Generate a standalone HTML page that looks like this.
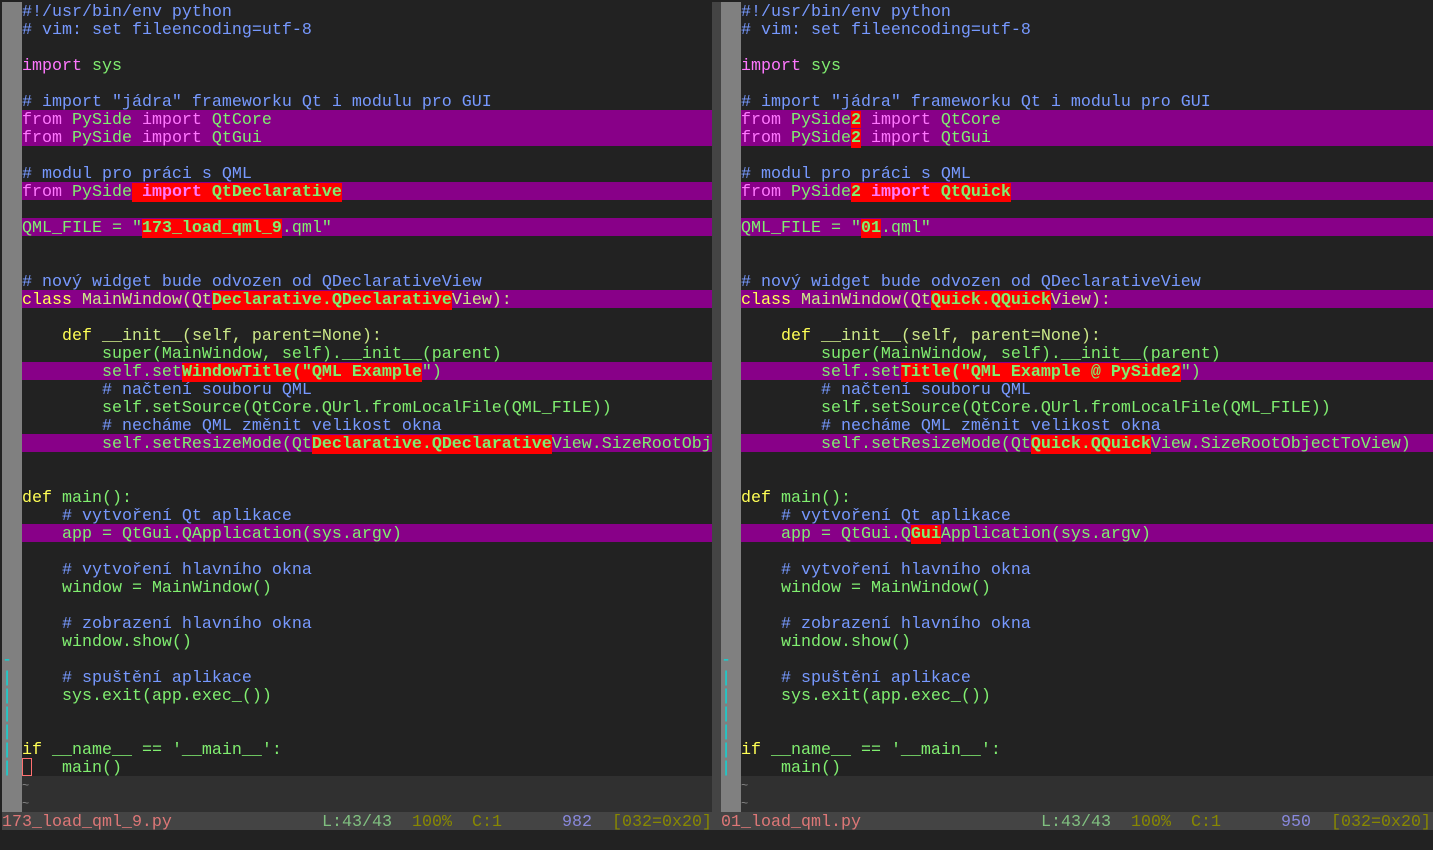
<!DOCTYPE html>
<html><head><meta charset="utf-8"><style>
html,body{margin:0;padding:0;background:#222;width:1433px;height:850px;overflow:hidden}
body{position:relative;font-family:"Liberation Mono",monospace;font-size:16.67px}
.pane{position:absolute;top:2px;overflow:hidden}
.r{height:18px;line-height:21px;white-space:pre;color:#80ee70;position:relative}
.p{background:#880088}
.t{background:#303030;color:#888;font-size:12px}
.c{color:#7799ff}.k{color:#ff77ff}.y{color:#ffff55}.x{background:#ff0000;font-weight:bold}.l{color:#cce888}
.gut{position:absolute;top:2px;width:20px;height:810px;background:#808080}
.f{position:absolute;color:#00e0e0;font-size:16px;line-height:20px;height:18px;width:10px;text-align:center}
.div{position:absolute;left:712px;top:2px;width:9px;height:810px;background:#444}
.st{position:absolute;left:2px;top:812px;width:1431px;height:18px;background:#444;line-height:21px;white-space:pre}
.st span{position:absolute;top:0}
</style></head><body>
<div class="gut" style="left:2px"></div>
<div class="gut" style="left:721px"></div>
<div class="div"></div>

<div class="pane" style="left:22px;width:690px">
<div class="r c">#!/usr/bin/env python</div>
<div class="r c"># vim: set fileencoding=utf-8</div>
<div class="r"> </div>
<div class="r"><span class="k">import</span> sys</div>
<div class="r"> </div>
<div class="r c"># import "jádra" frameworku Qt i modulu pro GUI</div>
<div class="r p"><span class="k">from</span> PySide <span class="k">import</span> QtCore</div>
<div class="r p"><span class="k">from</span> PySide <span class="k">import</span> QtGui</div>
<div class="r"> </div>
<div class="r c"># modul pro práci s QML</div>
<div class="r p"><span class="k">from</span> PySide<span class="x"> <span class="k">import</span> QtDeclarative</span></div>
<div class="r"> </div>
<div class="r p">QML_FILE = "<span class="x">173_load_qml_9</span>.qml"</div>
<div class="r"> </div>
<div class="r"> </div>
<div class="r c"># nový widget bude odvozen od QDeclarativeView</div>
<div class="r p"><span class="y">class</span> <span class="l">MainWindow(Qt</span><span class="x">Declarative.QDeclarative</span><span class="l">View):</span></div>
<div class="r"> </div>
<div class="r">    <span class="y">def</span> <span class="l">__init__(self, parent=None):</span></div>
<div class="r">        super(MainWindow, self).__init__(parent)</div>
<div class="r p">        self.set<span class="x">WindowTitle("QML Example</span>")</div>
<div class="r c">        # načtení souboru QML</div>
<div class="r">        self.setSource(QtCore.QUrl.fromLocalFile(QML_FILE))</div>
<div class="r c">        # necháme QML změnit velikost okna</div>
<div class="r p">        self.setResizeMode(Qt<span class="x">Declarative.QDeclarative</span>View.SizeRootObjectToView)</div>
<div class="r"> </div>
<div class="r"> </div>
<div class="r"><span class="y">def</span> main():</div>
<div class="r c">    # vytvoření Qt aplikace</div>
<div class="r p">    app = QtGui.QApplication(sys.argv)</div>
<div class="r"> </div>
<div class="r c">    # vytvoření hlavního okna</div>
<div class="r">    window = MainWindow()</div>
<div class="r"> </div>
<div class="r c">    # zobrazení hlavního okna</div>
<div class="r">    window.show()</div>
<div class="r"> </div>
<div class="r c">    # spuštění aplikace</div>
<div class="r">    sys.exit(app.exec_())</div>
<div class="r"> </div>
<div class="r"> </div>
<div class="r"><span class="y">if</span> __name__ == '__main__':</div>
<div class="r"><span style="position:absolute;left:0;top:0;width:8px;height:16px;border:1px solid #ff7070"></span>    main()</div>
<div class="r t">~</div>
<div class="r t">~</div>
</div>

<div class="pane" style="left:741px;width:692px">
<div class="r c">#!/usr/bin/env python</div>
<div class="r c"># vim: set fileencoding=utf-8</div>
<div class="r"> </div>
<div class="r"><span class="k">import</span> sys</div>
<div class="r"> </div>
<div class="r c"># import "jádra" frameworku Qt i modulu pro GUI</div>
<div class="r p"><span class="k">from</span> PySide<span class="x">2</span> <span class="k">import</span> QtCore</div>
<div class="r p"><span class="k">from</span> PySide<span class="x">2</span> <span class="k">import</span> QtGui</div>
<div class="r"> </div>
<div class="r c"># modul pro práci s QML</div>
<div class="r p"><span class="k">from</span> PySide<span class="x">2 <span class="k">import</span> QtQuick</span></div>
<div class="r"> </div>
<div class="r p">QML_FILE = "<span class="x">01</span>.qml"</div>
<div class="r"> </div>
<div class="r"> </div>
<div class="r c"># nový widget bude odvozen od QDeclarativeView</div>
<div class="r p"><span class="y">class</span> <span class="l">MainWindow(Qt</span><span class="x">Quick.QQuick</span><span class="l">View):</span></div>
<div class="r"> </div>
<div class="r">    <span class="y">def</span> <span class="l">__init__(self, parent=None):</span></div>
<div class="r">        super(MainWindow, self).__init__(parent)</div>
<div class="r p">        self.set<span class="x">Title("QML Example @ PySide2</span>")</div>
<div class="r c">        # načtení souboru QML</div>
<div class="r">        self.setSource(QtCore.QUrl.fromLocalFile(QML_FILE))</div>
<div class="r c">        # necháme QML změnit velikost okna</div>
<div class="r p">        self.setResizeMode(Qt<span class="x">Quick.QQuick</span>View.SizeRootObjectToView)</div>
<div class="r"> </div>
<div class="r"> </div>
<div class="r"><span class="y">def</span> main():</div>
<div class="r c">    # vytvoření Qt aplikace</div>
<div class="r p">    app = QtGui.Q<span class="x">Gui</span>Application(sys.argv)</div>
<div class="r"> </div>
<div class="r c">    # vytvoření hlavního okna</div>
<div class="r">    window = MainWindow()</div>
<div class="r"> </div>
<div class="r c">    # zobrazení hlavního okna</div>
<div class="r">    window.show()</div>
<div class="r"> </div>
<div class="r c">    # spuštění aplikace</div>
<div class="r">    sys.exit(app.exec_())</div>
<div class="r"> </div>
<div class="r"> </div>
<div class="r"><span class="y">if</span> __name__ == '__main__':</div>
<div class="r">    main()</div>
<div class="r t">~</div>
<div class="r t">~</div>
</div>

<div class="f" style="left:2px;top:650px">-</div>
<div class="f" style="left:2px;top:668px">|</div>
<div class="f" style="left:2px;top:686px">|</div>
<div class="f" style="left:2px;top:704px">|</div>
<div class="f" style="left:2px;top:722px">|</div>
<div class="f" style="left:2px;top:740px">|</div>
<div class="f" style="left:2px;top:758px">|</div>
<div class="f" style="left:721px;top:650px">-</div>
<div class="f" style="left:721px;top:668px">|</div>
<div class="f" style="left:721px;top:686px">|</div>
<div class="f" style="left:721px;top:704px">|</div>
<div class="f" style="left:721px;top:722px">|</div>
<div class="f" style="left:721px;top:740px">|</div>
<div class="f" style="left:721px;top:758px">|</div>

<div class="st">
<span style="left:0;color:#d77">173_load_qml_9.py</span>
<span style="left:320px;color:#80c080">L:43/43</span>
<span style="left:410px;color:#888800">100%</span>
<span style="left:470px;color:#888800">C:1</span>
<span style="left:560px;color:#8888dd">982</span>
<span style="left:610px;color:#888800">[032=0x20]</span>
<span style="left:719px;color:#d77">01_load_qml.py</span>
<span style="left:1039px;color:#80c080">L:43/43</span>
<span style="left:1129px;color:#888800">100%</span>
<span style="left:1189px;color:#888800">C:1</span>
<span style="left:1279px;color:#8888dd">950</span>
<span style="left:1329px;color:#888800">[032=0x20]</span>
</div>
</body></html>
